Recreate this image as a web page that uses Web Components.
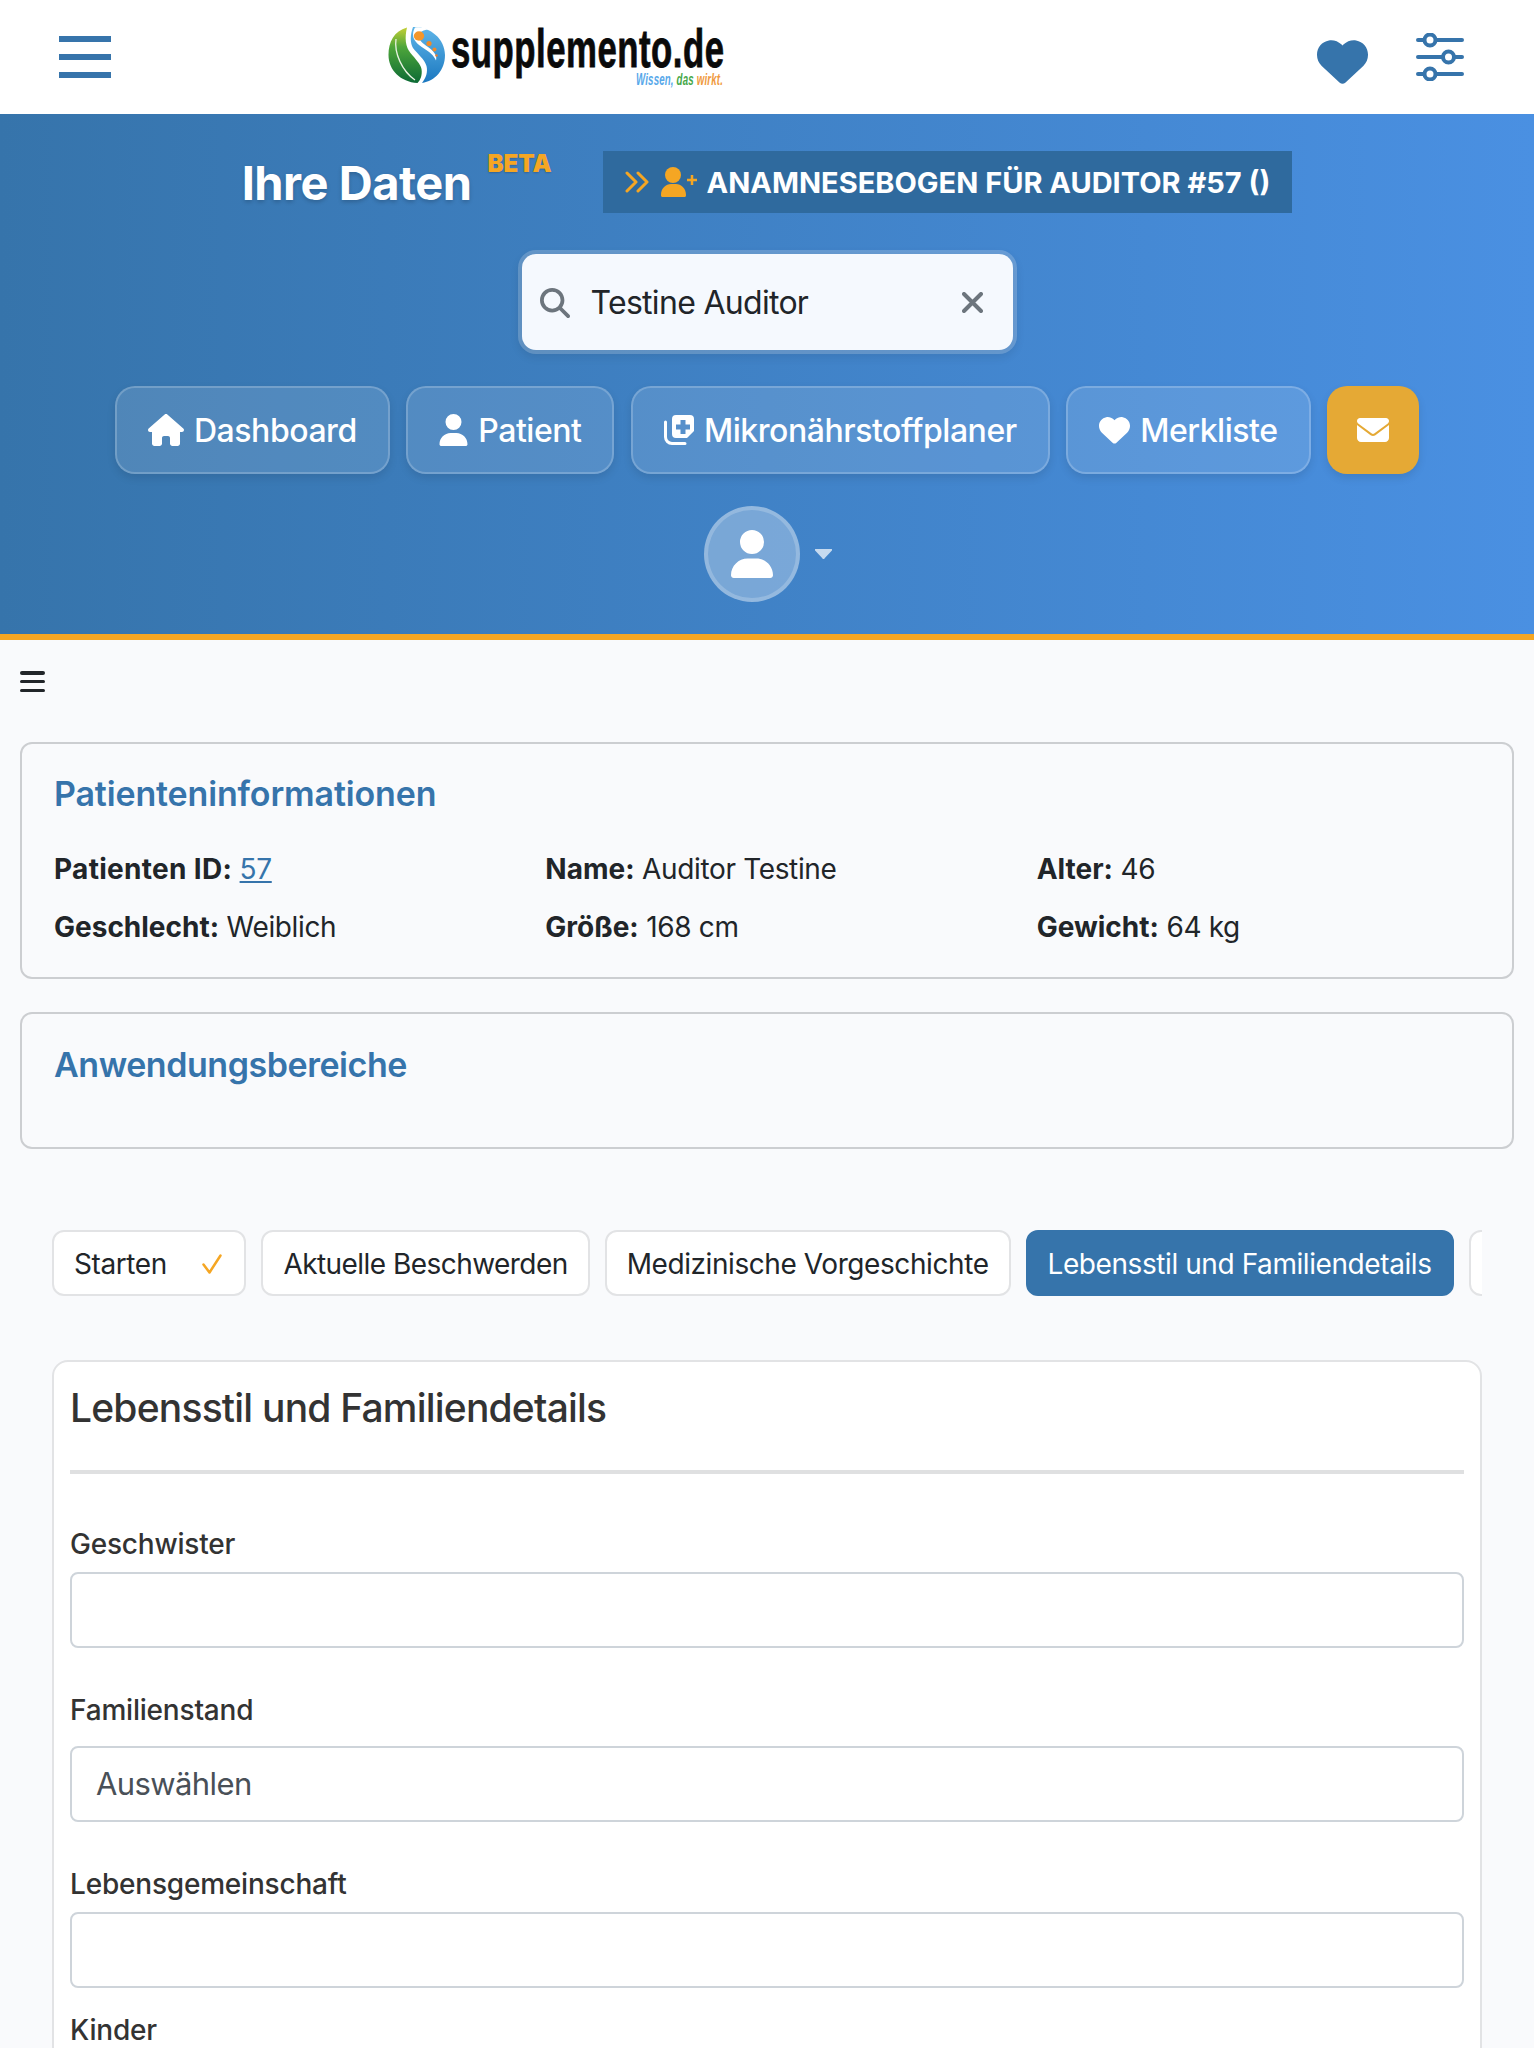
<!DOCTYPE html>
<html lang="de">

<head>
    <meta charset="UTF-8">
    <title>Ihre Daten</title>
    <style>
        html, body {
            margin: 0;
            height: 2048px;
            overflow: hidden;
            background: #f9fafc;
            font-family: Inter, "Liberation Sans", sans-serif;
            color: #212529;
        }
    </style>
</head>

<body>

<sk-topbar></sk-topbar>

<sk-hero>
    <sk-nav-button icon="home" label="Dashboard" icon-width="36"></sk-nav-button>
    <sk-nav-button icon="user" label="Patient" icon-width="29"></sk-nav-button>
    <sk-nav-button icon="notes" label="Mikronährstoffplaner" icon-width="30"></sk-nav-button>
    <sk-nav-button icon="heart" label="Merkliste" icon-width="31"></sk-nav-button>
    <sk-nav-button icon="mail" accent></sk-nav-button>
</sk-hero>

<sk-sidebar-toggle></sk-sidebar-toggle>

<sk-card heading="Patienteninformationen" style="--heading-spacing:-.15px">
    <sk-info-grid>
        <sk-info label="Patienten ID:" style="--label-spacing:.3px"><a href="#57" style="color:#3674ab">57</a></sk-info>
        <sk-info label="Name:">Auditor Testine</sk-info>
        <sk-info label="Alter:">46</sk-info>
        <sk-info label="Geschlecht:">Weiblich</sk-info>
        <sk-info label="Größe:">168 cm</sk-info>
        <sk-info label="Gewicht:">64 kg</sk-info>
    </sk-info-grid>
</sk-card>

<sk-card heading="Anwendungsbereiche" empty style="--heading-spacing:-.45px"></sk-card>

<sk-tabs>
    <sk-tab done>Starten</sk-tab>
    <sk-tab style="letter-spacing:-.55px">Aktuelle Beschwerden</sk-tab>
    <sk-tab>Medizinische Vorgeschichte</sk-tab>
    <sk-tab active>Lebensstil und Familiendetails</sk-tab>
    <sk-tab></sk-tab>
</sk-tabs>

<sk-panel heading="Lebensstil und Familiendetails">
    <sk-field label="Geschwister" gap="18" after="82"></sk-field>
    <sk-field label="Familienstand" value="Auswählen" gap="26" after="74"></sk-field>
    <sk-field label="Lebensgemeinschaft" gap="18" after="74"></sk-field>
    <sk-field label="Kinder" gap="18" after="54"></sk-field>
</sk-panel>

<script>
    const ICONS = {
  home: `<svg viewBox="0 0 576 512" fill="currentColor"><path d="M575.8 255.5c0 18-15 32.1-32 32.1h-32l.7 160.2c0 2.7-.2 5.4-.5 8.1V472c0 22.1-17.9 40-40 40H456c-1.1 0-2.2 0-3.3-.1c-1.4 .1-2.8 .1-4.2 .1H416 392c-22.1 0-40-17.9-40-40V448 384c0-17.7-14.3-32-32-32H256c-17.7 0-32 14.3-32 32v64 24c0 22.1-17.9 40-40 40H160 128.1c-1.5 0-3-.1-4.5-.2c-1.2 .1-2.4 .2-3.6 .2H104c-22.1 0-40-17.9-40-40V360c0-.9 0-1.9 .1-2.8V287.6H32c-18 0-32-14-32-32.1c0-9 3-17 10-24L266.4 8c7-7 15-8 22-8s15 2 21 7L564.8 231.5c8 7 12 15 11 24z"/></svg>`,
  user: `<svg viewBox="0 0 448 512" fill="currentColor"><path d="M224 256A128 128 0 1 0 224 0a128 128 0 1 0 0 256zm-45.7 48C79.8 304 0 383.8 0 482.3C0 498.7 13.3 512 29.7 512H418.3c16.4 0 29.7-13.3 29.7-29.7C448 383.8 368.2 304 269.7 304H178.3z"/></svg>`,
  heart: `<svg viewBox="0 0 512 512" fill="currentColor"><path d="M47.6 300.4L228.3 469.1c7.5 7 17.4 10.9 27.7 10.9s20.2-3.9 27.7-10.9L464.4 300.4c30.4-28.3 47.6-68 47.6-109.5v-5.8c0-69.9-50.5-129.5-119.4-141C347 36.5 300.6 51.4 268 84L256 96 244 84c-32.6-32.6-79-47.5-124.6-39.9C50.5 55.6 0 115.2 0 185.1v5.8c0 41.5 17.2 81.2 47.6 109.5z"/></svg>`,
  mail: `<svg viewBox="0 0 512 512" fill="currentColor"><path d="M48 64C21.5 64 0 85.5 0 112c0 15.1 7.1 29.3 19.2 38.4L236.8 313.6c11.4 8.5 27 8.5 38.4 0L492.8 150.4c12.1-9.1 19.2-23.3 19.2-38.4c0-26.5-21.5-48-48-48H48zM0 176V384c0 35.3 28.7 64 64 64H448c35.3 0 64-28.7 64-64V176L294.4 339.2c-22.8 17.1-54 17.1-76.8 0L0 176z"/></svg>`,
  notes: `<svg viewBox="0 0 30 30"><path fill="currentColor" fill-rule="evenodd" d="M12 0h14a4 4 0 0 1 4 4v12l-7 7H12a4 4 0 0 1-4-4V4a4 4 0 0 1 4-4zM16.5 5v4.5H12v5h4.5V19h5v-4.5H26v-5h-4.5V5z"/><path fill="none" stroke="currentColor" stroke-width="3" stroke-linecap="round" d="M1.5 7v15a6.5 6.5 0 0 0 6.5 6.5h13"/></svg>`,
  search: `<svg viewBox="0 0 512 512" fill="currentColor"><path d="M416 208c0 45.9-14.9 88.3-40 122.7L502.6 457.4c12.5 12.5 12.5 32.8 0 45.3s-32.8 12.5-45.3 0L330.7 376c-34.4 25.2-76.8 40-122.7 40C93.1 416 0 322.9 0 208S93.1 0 208 0S416 93.1 416 208zM208 352a144 144 0 1 0 0-288 144 144 0 1 0 0 288z"/></svg>`
};

class SkTopbar extends HTMLElement {
  constructor() {
    super();
    this.attachShadow({ mode: "open" });
    this.shadowRoot.innerHTML = `
      <style>
        :host { display: flex; align-items: center; height: 114px; background: #fff; padding: 0 70px 0 59px; box-sizing: border-box; }
        .burger { display: flex; flex-direction: column; justify-content: space-between; width: 52px; height: 42px; margin-top: -1px; }
        .burger i { display: block; height: 6px; background: #3674ab; }
        .logo { display: flex; margin-left: 278px; align-items: flex-start; height: 60px; margin-top: -4px; }
        .logo svg { width: 66px; height: 66px; margin: -3px -3px 0 -5px; flex: none; }
        .words { width: 272px; margin-left: 4px; }
        .name { display: block; width: 272px; height: 42px; margin-top: 3px; font: bold 53px/42px "Liberation Sans", sans-serif; color: #0a0a0a; -webkit-text-stroke: .8px #0a0a0a; letter-spacing: .8px; transform: scaleX(.655); transform-origin: left; white-space: nowrap; }
        .tag { display: block; width: 124px; margin: 3px 0 0 185px; font: italic bold 17px/14px "Liberation Sans", sans-serif; white-space: nowrap; transform: scaleX(.57); transform-origin: left; letter-spacing: .3px; }
        .right { margin-left: auto; display: flex; align-items: center; gap: 48px; }
        .heart { width: 51px; height: 51px; color: #3674ab; margin-top: 9px; }
        .sliders { width: 48px; height: 48px; margin-top: -1px; }
      </style>
      <div class="burger"><i></i><i></i><i></i></div>
      <div class="logo">
        <svg viewBox="0 0 66 66">
          <defs>
            <linearGradient id="g" x1="0" y1="0" x2="0" y2="1"><stop offset="0" stop-color="#c4cf35"/><stop offset=".35" stop-color="#4ea63a"/><stop offset="1" stop-color="#0c6a35"/></linearGradient>
            <linearGradient id="b" x1="0" y1="0" x2="0" y2="1"><stop offset="0" stop-color="#5fb5e8"/><stop offset="1" stop-color="#1b78c0"/></linearGradient>
          </defs>
          <path fill="url(#g)" d="M23 5.5C10 9 4.500 20 4.500 33c0 15 12 27 29 28 3-3 5-8 4-14-1-5-6-10-11-16-5-6-6-15-3.500-25.500z"/>
          <path fill="url(#b)" d="M29 5c16-1 32 11 32 28 0 15-10 26-23 28 4-5 6-11 4.500-17-2-7-9-12-13.500-18-3-5-3-13 0-21z"/>
          <path fill="#fff" d="M31 5.500c5-.5 10 0 14 2-5 0-10 2-10 7 0 5 6 8 11 12 5 4 7 8 6 12-2-5-7-9-12-12-6-4-11-8-11-14 0-3 1-5 2-7z"/>
          <path fill="none" stroke="#e9f3e2" stroke-width="1.300" d="M12 17c-2 14 6 32 19 41"/>
          <ellipse cx="35" cy="14" rx="5.200" ry="4.700" fill="#f4962a"/>
          <circle cx="45" cy="21.500" r="2.600" fill="#ee8a2a"/>
          <circle cx="50.500" cy="27.500" r="2" fill="#ee8a2a"/>
          <circle cx="52.500" cy="33.500" r="1.200" fill="#ee7a2a"/>
        </svg>
        <div class="words">
          <span class="name">supplemento.de</span>
          <span class="tag"><span style="color:#57a8ea">Wissen,</span> <span style="color:#46a84a">das</span> <span style="color:#f09a3e">wirkt.</span></span>
        </div>
      </div>
      <div class="right">
        <div class="heart">${ICONS.heart}</div>
        <svg class="sliders" viewBox="0 0 48 48" fill="none" stroke="#3674ab" stroke-width="4" stroke-linecap="round">
          <path d="M2 7h44M2 24h44M2 41h44"/>
          <circle cx="14" cy="7" r="5.500" fill="#fff"/>
          <circle cx="32.500" cy="24" r="5.500" fill="#fff"/>
          <circle cx="14" cy="41" r="5.500" fill="#fff"/>
        </svg>
      </div>
    `;
  }
}

class SkHero extends HTMLElement {
  constructor() {
    super();
    this.attachShadow({ mode: "open" });
    this.shadowRoot.innerHTML = `
      <style>
        :host { display: flex; flex-direction: column; align-items: center; box-sizing: border-box; height: 526px; padding-top: 37px; background: linear-gradient(90deg, #3674ab, #4a90e2); border-bottom: 6px solid #f5a623; color: #fff; }
        .heading { display: flex; align-items: center; height: 62px; }
        h1 { margin: 2px 0 0; font-size: 47px; line-height: 62px; font-weight: 700; letter-spacing: -.5px; text-shadow: 0 2px 4px rgba(0,0,0,.2); }
        .beta { align-self: flex-start; margin: 1px 51px 0 16px; font-size: 24px; line-height: 24px; font-weight: 900; color: #f5a623; text-shadow: 0 1px 2px rgba(0,0,0,.2); }
        .form { display: flex; align-items: center; height: 62px; padding: 0 22px; background: #2f6a9e; font-size: 29px; font-weight: 700; gap: 10px; white-space: nowrap; }
        .form svg { flex: none; }
        .form .chev { width: 24px; height: 22px; }
        .form .add { width: 38px; height: 30px; }
        .search { display: flex; align-items: center; box-sizing: border-box; width: 491px; height: 96px; margin-top: 41px; padding: 0 30px 0 18px; background: #f5f9fe; border-radius: 14px; box-shadow: 0 0 0 4px rgba(255,255,255,.2), 0 4px 8px 4px rgba(0,0,0,.08); color: #212529; font-size: 32px; letter-spacing: -.7px; }
        .search .glass { width: 30px; height: 30px; color: #6c757d; margin-right: 21px; }
        .search .clear { width: 21px; height: 21px; margin-left: auto; }
        .nav { display: flex; gap: 16.500px; margin-top: 36px; }
        .who { display: flex; align-items: center; gap: 15px; margin: 32px 0 0 2px; }
        .avatar { display: flex; align-items: center; justify-content: center; box-sizing: border-box; width: 96px; height: 96px; border-radius: 50%; background: rgba(255,255,255,.3); border: 4px solid rgba(255,255,255,.2); }
        .avatar svg { width: 42px; height: 48px; }
        .caret { width: 17px; height: 10px; }
      </style>
      <div class="heading">
        <h1>Ihre Daten</h1>
        <span class="beta">BETA</span>
        <div class="form">
          <svg class="chev" viewBox="0 0 24 22" fill="none" stroke="#f5a623" stroke-width="3" stroke-linecap="round" stroke-linejoin="round"><path d="M2 2l9 9-9 9M13 2l9 9-9 9"/></svg>
          <svg class="add" viewBox="0 0 38 30"><g fill="#f5a623"><circle cx="14" cy="8" r="8"/><path d="M5 30a2 2 0 0 1-3-2c0-7 5-11 10-11h5c5 0 10 4 10 11a2 2 0 0 1-3 2z"/></g><path d="M33 8v10M28 13h10" stroke="#f5a623" stroke-width="2.500"/></svg>
          <span>ANAMNESEBOGEN FÜR AUDITOR #57 ()</span>
        </div>
      </div>
      <div class="search">
        <div class="glass">${ICONS.search}</div>
        <span>Testine Auditor</span>
        <svg class="clear" viewBox="0 0 21 21" stroke="#6c757d" stroke-width="4" stroke-linecap="round"><path d="M2 2l17 17M19 2L2 19"/></svg>
      </div>
      <nav class="nav"><slot></slot></nav>
      <div class="who">
        <div class="avatar">${ICONS.user}</div>
        <svg class="caret" viewBox="0 0 18 11"><path fill="rgba(255,255,255,.7)" d="M1 0h16a1 1 0 0 1 1 2L10 10.500a1 1 0 0 1-2 0L0 2a1 1 0 0 1 1-2z"/></svg>
      </div>
    `;
  }
}

class SkNavButton extends HTMLElement {
  constructor() {
    super();
    this.attachShadow({ mode: "open" });
  }

  connectedCallback() {
    const label = this.getAttribute("label");
    const iconWidth = this.getAttribute("icon-width") || 30;
    this.shadowRoot.innerHTML = `
      <style>
        :host { display: flex; align-items: center; box-sizing: border-box; height: 88px; padding: 0 31px; gap: 10px; border-radius: 20px; border: 2px solid rgba(255,255,255,.2); background: rgba(255,255,255,.12); box-shadow: 0 4px 8px rgba(0,0,0,.1); color: #fff; font-size: 32px; font-weight: 500; letter-spacing: -.46px; white-space: nowrap; }
        :host([accent]) { background: #e5a935; border: 0; padding: 0 30px; }
        .icon { display: flex; width: ${iconWidth}px; height: 32px; align-items: center; }
        :host([accent]) .icon { width: 32px; }
        svg { width: 100%; height: 100%; display: block; }
      </style>
      <span class="icon">${ICONS[this.getAttribute("icon")]}</span>
      ${label ? `<span>${label}</span>` : ""}
    `;
  }
}

class SkSidebarToggle extends HTMLElement {
  constructor() {
    super();
    this.attachShadow({ mode: "open" });
    this.shadowRoot.innerHTML = `
      <style>
        :host { display: flex; flex-direction: column; justify-content: space-between; box-sizing: border-box; width: 25px; height: 21px; margin: 31px 0 50px 20px; }
        i { display: block; height: 3.500px; border-radius: 2px; background: #212529; }
      </style>
      <i></i><i></i><i></i>
    `;
  }
}

class SkCard extends HTMLElement {
  constructor() {
    super();
    this.attachShadow({ mode: "open" });
  }

  connectedCallback() {
    this.shadowRoot.innerHTML = `
      <style>
        :host { display: block; box-sizing: border-box; margin: 0 20px 33px; padding: 30px 32px 33px; border: 2px solid #ccced1; border-radius: 12px; background: #f9fafc; }
        :host([empty]) { height: 137px; padding-top: 31px; }
        h3 { margin: 0 0 38px; font-size: 34px; line-height: 40px; font-weight: 600; color: #3674ab; letter-spacing: var(--heading-spacing, -.25px); }
      </style>
      <h3>${this.getAttribute("heading")}</h3>
      <slot></slot>
    `;
  }
}

class SkInfoGrid extends HTMLElement {
  constructor() {
    super();
    this.attachShadow({ mode: "open" });
    this.shadowRoot.innerHTML = `
      <style>
        :host { display: grid; grid-template-columns: repeat(3, 1fr); gap: 24px 48px; }
      </style>
      <slot></slot>
    `;
  }
}

class SkInfo extends HTMLElement {
  constructor() {
    super();
    this.attachShadow({ mode: "open" });
  }

  connectedCallback() {
    this.shadowRoot.innerHTML = `
      <style>
        :host { display: block; font-size: 28px; line-height: 34px; color: #212529; letter-spacing: -.35px; white-space: nowrap; }
        b { font-weight: 700; letter-spacing: var(--label-spacing, 0); }
      </style>
      <b>${this.getAttribute("label")}</b> <slot></slot>
    `;
  }
}

class SkTabs extends HTMLElement {
  constructor() {
    super();
    this.attachShadow({ mode: "open" });
    this.shadowRoot.innerHTML = `
      <style>
        :host { display: flex; gap: 15px; margin: 81px 52px 64px; overflow: hidden; }
      </style>
      <slot></slot>
    `;
  }
}

class SkTab extends HTMLElement {
  constructor() {
    super();
    this.attachShadow({ mode: "open" });
    this.shadowRoot.innerHTML = `
      <style>
        :host { display: flex; flex: none; align-items: center; box-sizing: border-box; height: 66px; min-width: 60px; padding: 1px 20px 0; border: 2px solid #e2e3e5; border-radius: 12px; background: #fff; font-size: 28px; letter-spacing: -.42px; color: #212529; white-space: nowrap; }
        :host([active]) { background: #3674ab; border-color: #3674ab; color: #fff; }
        :host([done]) { padding-right: 22.600px; }
        svg { display: none; width: 20px; height: 20px; margin-left: 35px; }
        :host([done]) svg { display: block; }
      </style>
      <slot></slot>
      <svg viewBox="0 0 20 20" fill="none" stroke="#f5a623" stroke-width="2.500" stroke-linecap="round" stroke-linejoin="round"><path d="M1.500 10.500L7.500 18.500L18.500 1.500"/></svg>
    `;
  }
}

class SkPanel extends HTMLElement {
  constructor() {
    super();
    this.attachShadow({ mode: "open" });
  }

  connectedCallback() {
    this.shadowRoot.innerHTML = `
      <style>
        :host { display: block; box-sizing: border-box; margin: 0 52px; padding: 0 16px; border: 2px solid #e2e3e5; border-radius: 16px; background: #fff; }
        h2 { margin: 0; padding: 21px 0 37px; font-size: 39px; line-height: 50px; font-weight: 500; letter-spacing: -.8px; color: #333; border-bottom: 4px solid #dfe0e1; }
      </style>
      <h2>${this.getAttribute("heading")}</h2>
      <slot></slot>
    `;
  }
}

class SkField extends HTMLElement {
  constructor() {
    super();
    this.attachShadow({ mode: "open" });
  }

  connectedCallback() {
    const value = this.getAttribute("value") || "";
    this.shadowRoot.innerHTML = `
      <style>
        :host { display: block; padding-top: ${this.getAttribute("after") - 31}px; }
        label { display: block; font-size: 28px; line-height: 38px; font-weight: 500; letter-spacing: -.2px; color: #333; }
        .control { box-sizing: border-box; height: 76px; margin-top: ${this.getAttribute("gap") - 9}px; padding: 0 24px; border: 2px solid #ced4da; border-radius: 8px; background: #fff; font-size: 31px; letter-spacing: -.6px; line-height: 72px; color: #495057; }
      </style>
      <label>${this.getAttribute("label")}</label>
      <div class="control">${value}</div>
    `;
  }
}

customElements.define("sk-topbar", SkTopbar);
customElements.define("sk-hero", SkHero);
customElements.define("sk-nav-button", SkNavButton);
customElements.define("sk-sidebar-toggle", SkSidebarToggle);
customElements.define("sk-card", SkCard);
customElements.define("sk-info-grid", SkInfoGrid);
customElements.define("sk-info", SkInfo);
customElements.define("sk-tabs", SkTabs);
customElements.define("sk-tab", SkTab);
customElements.define("sk-panel", SkPanel);
customElements.define("sk-field", SkField);
</script>

</body>

</html>
